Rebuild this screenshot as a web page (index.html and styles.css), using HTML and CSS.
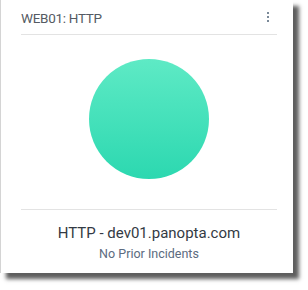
FILE: index.html
```html
<!doctype html>
<html lang="en">
  <head>
    <meta charset="UTF-8" />
    <title>WEB01: HTTP</title>
    <link rel="stylesheet" href="styles.css">
  </head>
  <body>
    <div class="card">
      <div class="header">
        <span class="title">WEB01: HTTP</span>
        <span class="menu"><i></i><i></i><i></i></span>
      </div>
      <div class="status">
        <div class="circle"></div>
      </div>
      <div class="footer">
        <div class="name">HTTP - dev01.panopta.com</div>
        <div class="incidents">No Prior Incidents</div>
      </div>
    </div>
  </body>
</html>
```
FILE: styles.css
```css
body {
  margin: 0;
  padding: 0 0 17px 0;
  background-color: #ffffff;
  font-family: Roboto, "Liberation Sans", sans-serif;
}

.card {
  width: 293px;
  height: 273px;
  border-left: 1px solid #d4d4d4;
  background-color: #ffffff;
  box-shadow: 6px 6px 4px rgba(40, 40, 40, 0.75);
  display: flex;
  flex-direction: column;
  padding: 0 16px 0 20px;
  box-sizing: border-box;
}

.header {
  height: 35px;
  border-bottom: 1px solid #e3e3e3;
  display: flex;
  align-items: center;
  justify-content: space-between;
  padding-top: 1px;
  box-sizing: border-box;
}

.title {
  font-size: 13.5px;
  color: #555b63;
  letter-spacing: -0.3px;
}

.menu {
  display: flex;
  flex-direction: column;
  gap: 2px;
  margin-right: 8px;
  margin-top: -2px;
}

.menu i {
  display: block;
  width: 2px;
  height: 2px;
  background-color: #7b8a99;
}

.status {
  height: 175px;
  border-bottom: 1px solid #e3e3e3;
  display: flex;
  justify-content: center;
  padding-top: 24px;
  box-sizing: border-box;
}

.circle {
  width: 120px;
  height: 120px;
  border-radius: 50%;
  background: linear-gradient(#5eeac5, #2cd8b0);
}

.footer {
  display: flex;
  flex-direction: column;
  align-items: center;
  padding-top: 14px;
}

.name {
  font-size: 15px;
  color: #333a44;
  line-height: 18px;
}

.incidents {
  font-size: 12.5px;
  color: #5c6b80;
  line-height: 14px;
  margin-top: 5px;
}
```
